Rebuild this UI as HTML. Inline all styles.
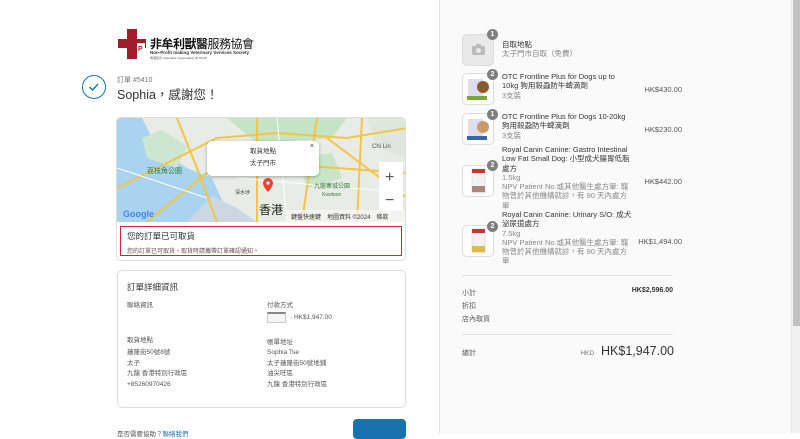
<!DOCTYPE html>
<html><head><meta charset="utf-8"><style>
*{margin:0;padding:0;box-sizing:border-box}
body{width:800px;height:433px;overflow:hidden;background:#fff;font-family:"Liberation Sans","Noto Sans CJK TC",sans-serif;color:#333;position:relative}
.a{position:absolute}
.s{font-size:8px;color:#555}
.right{left:439px;top:0;width:352px;height:433px;background:#fafafa;border-left:1px solid #e1e1e1}
.sb{left:791px;top:0;width:9px;height:433px;background:#f1f1f1;border-left:1px solid #e5e5e5}
.sb div{position:absolute;left:1px;top:0;width:7px;height:326px;background:#c1c1c1}
.thumb{width:32px;height:32px;border:1px solid #ddd;border-radius:5px;background:#fff}
.badge{width:11px;height:11px;border-radius:50%;background:#7f7f7f;color:#fff;font-size:7px;text-align:center;line-height:11px;font-weight:bold}
.pt{font-size:7.5px;color:#333;line-height:9.3px;white-space:nowrap}
.pt span{color:#888;line-height:9.3px}
.pr{font-size:7.5px;color:#555;right:118px}
</style></head><body>
<!-- logo -->
<div class="a" style="left:116px;top:29px;width:32px;height:30px">
<svg width="32" height="30"><rect x="2" y="10" width="28" height="9" fill="#a11d2b"/><rect x="11" y="0" width="10" height="30" fill="#a11d2b"/><rect x="21" y="14" width="8" height="9" fill="#fff"/><text x="22" y="22" font-size="7" fill="#a11d2b" font-weight="bold">P</text></svg></div>
<div class="a" style="left:150px;top:35px;font-size:12px;font-weight:bold;color:#111;letter-spacing:-0.5px">非牟利獸醫<span style="font-weight:normal">服務協會</span></div>
<div class="a" style="left:150px;top:50px;font-size:4.5px;color:#333;font-weight:bold">Non-Profit making Veterinary Services Society</div>
<div class="a" style="left:150px;top:56px;font-size:3px;color:#555">香港慈善 Charitable Organization IR 91/35</div>
<!-- check -->
<div class="a" style="left:82px;top:75px;width:24px;height:24px;border:1.5px solid #1773b0;border-radius:50%"><svg width="21" height="21" style="position:absolute;left:0;top:0"><path d="M6.5 11 L9.5 14 L15 8" stroke="#1773b0" stroke-width="1.4" fill="none"/></svg></div>
<div class="a s" style="left:117px;top:75px;font-size:7px;color:#777">訂單 #5410</div>
<div class="a" style="left:117px;top:84px;font-size:12.5px;color:#333">Sophia，感謝您！</div>
<!-- map card -->
<div class="a" style="left:116px;top:117px;width:290px;height:144px;border:1px solid #ddd;border-radius:5px;overflow:hidden">
<svg width="290" height="104" style="position:absolute;left:0;top:0">
<rect width="290" height="104" fill="#e8ebe6"/>
<path d="M0 0 H25 L40 30 L70 50 L95 60 L115 104 H0Z" fill="#aad3f0"/>
<path d="M25 20 L45 12 L70 28 L60 50 L30 40Z" fill="#cde6d0"/>
<path d="M70 104 L95 78 L120 90 L140 104Z" fill="#cbd8e4"/>
<path d="M110 0 H230 L215 20 L140 25Z" fill="#c5e3c5"/>
<path d="M180 40 L215 35 L225 60 L190 70Z" fill="#c8e6c6"/>
<path d="M250 0 L290 0 L290 40 L260 30Z" fill="#dfe6dc"/>
<g stroke="#f4c542" stroke-width="2" fill="none">
<path d="M0 70 L60 40 L100 20 L160 15 L230 20 L290 10"/>
<path d="M140 0 L140 104"/><path d="M200 0 L185 104"/><path d="M245 0 L240 104"/>
<path d="M30 104 L90 55 L150 45 L290 55"/><path d="M60 0 L80 50 L100 104"/>
<path d="M210 20 L290 80"/>
</g>
<g stroke="#fff" stroke-width="1" fill="none"><path d="M0 50 L90 80"/><path d="M120 60 L290 75"/><path d="M160 0 L170 104"/></g>
<text x="30" y="55" font-size="7" fill="#2e7d32">荔枝角公園</text>
<text x="197" y="70" font-size="6" fill="#2e7d32">九龍寨城公園</text>
<text x="205" y="78" font-size="5" fill="#2e7d32">Kowloon</text>
<text x="255" y="30" font-size="6" fill="#555">Chi Lin</text>
<text x="118" y="76" font-size="5" fill="#444">深水埗</text>
<text x="142" y="96" font-size="12" fill="#222">香港</text>
<text x="6" y="99" font-size="9" fill="#4285f4" font-weight="bold">Google</text>
<rect x="170" y="92" width="120" height="12" fill="#f5f5f5" opacity=".8"/>
<text x="174" y="101" font-size="6" fill="#333">鍵盤快速鍵　地圖資料 ©2024　條款</text>
<path d="M146 65 a5 5 0 1 1 10 0 c0 4 -5 9 -5 9 c0 0 -5 -5 -5 -9z" fill="#ea4335"/><circle cx="151" cy="65" r="1.6" fill="#fff"/>
<rect x="262" y="44" width="24" height="49" fill="#fff"/>
<text x="268" y="64" font-size="16" fill="#555">+</text><text x="268" y="87" font-size="16" fill="#555">−</text>
</svg>
<div class="a" style="left:90px;top:23px;width:112px;height:35px;background:#fff;border-radius:5px;box-shadow:0 1px 3px rgba(0,0,0,.3);text-align:center;font-size:6.5px;color:#333;line-height:12px;padding-top:5px">取貨地點<br>太子門市<span style="position:absolute;right:5px;top:0;font-size:7px">×</span></div>
<div class="a" style="left:3px;top:108px;width:282px;height:30px;border:1.5px solid #d9213b;padding:3px 6px">
<div style="font-size:8.5px;color:#333">您的訂單已可取貨</div>
<div style="font-size:6px;color:#555;margin-top:4px">您的訂單已可取貨。取貨時請攜帶訂單確認通知。</div></div>
</div>
<!-- details -->
<div class="a" style="left:117px;top:270px;width:289px;height:138px;border:1px solid #ddd;border-radius:5px"></div>
<div class="a" style="left:127px;top:281px;font-size:8.5px;color:#333">訂單詳細資訊</div>
<div class="a s" style="left:127px;top:299px;font-size:6.5px">聯絡資訊</div>
<div class="a s" style="left:267px;top:299px;font-size:6.5px">付款方式</div>
<div class="a" style="left:267px;top:312px;width:19px;height:11px;border:1px solid #ccc;border-top:2px solid #888;background:#f5f5f5"></div>
<div class="a s" style="left:290px;top:314px;font-size:6.5px">· HK$1,947.00</div>
<div class="a s" style="left:127px;top:334px;font-size:6.5px">取貨地點</div>
<div class="a s" style="left:127px;top:348px;font-size:6.5px;line-height:10.7px">蓮隆街50號8號<br>太子<br>九龍 香港特別行政區<br>+85260970426</div>
<div class="a s" style="left:267px;top:336px;font-size:6.5px">帳單地址</div>
<div class="a s" style="left:267px;top:348px;font-size:6.5px;line-height:10.7px">Sophia Tse<br>太子蓮隆街50號地鋪<br>油尖旺區<br>九龍 香港特別行政區</div>
<div class="a s" style="left:117px;top:428px;font-size:6.5px">是否需要協助？<span style="color:#1773b0">聯絡我們</span></div>
<div class="a" style="left:353px;top:419px;width:53px;height:20px;background:#1773b0;border-radius:4px"></div>
<!-- right -->
<div class="a right"></div>
<div class="a sb"><div></div></div>
<div class="a thumb" style="left:462px;top:34px;background:#e9e9e9"><svg width="30" height="30"><rect x="9" y="11" width="13" height="9" rx="1.5" fill="#bbb"/><rect x="13" y="9" width="5" height="3" fill="#bbb"/><circle cx="15.5" cy="15.5" r="2.5" fill="#e9e9e9"/></svg></div>
<div class="a badge" style="left:487px;top:29px">1</div>
<div class="a pt" style="left:502px;top:40px">自取地點<br><span>太子門市自取（免費）</span></div>

<div class="a thumb" style="left:462px;top:73px"><svg width="30" height="30"><rect x="5" y="5" width="15" height="20" fill="#dde"/><circle cx="20" cy="13" r="6" fill="#8b5a2b"/><rect x="4" y="22" width="20" height="4" fill="#7a3"/></svg></div>
<div class="a badge" style="left:487px;top:69px">2</div>
<div class="a pt" style="left:502px;top:72px">OTC Frontline Plus for Dogs up to<br>10kg 狗用殺蝨防牛蜱滴劑<br><span>3支裝</span></div>
<div class="a pr" style="top:85px">HK$430.00</div>

<div class="a thumb" style="left:462px;top:113px"><svg width="30" height="30"><rect x="5" y="5" width="15" height="20" fill="#dde"/><circle cx="20" cy="13" r="6" fill="#c96"/><rect x="4" y="22" width="20" height="4" fill="#36a"/></svg></div>
<div class="a badge" style="left:487px;top:109px">1</div>
<div class="a pt" style="left:502px;top:112px">OTC Frontline Plus for Dogs 10-20kg<br>狗用殺蝨防牛蜱滴劑<br><span>3支裝</span></div>
<div class="a pr" style="top:125px">HK$230.00</div>

<div class="a thumb" style="left:462px;top:165px"><svg width="30" height="30"><rect x="9" y="3" width="13" height="24" fill="#f2f2f2" stroke="#ccc" stroke-width=".5"/><rect x="9" y="3" width="13" height="4" fill="#c33"/><rect x="9" y="20" width="13" height="6" fill="#a87"/></svg></div>
<div class="a badge" style="left:487px;top:160px">2</div>
<div class="a pt" style="left:502px;top:145px">Royal Canin Canine: Gastro Intestinal<br>Low Fat Small Dog: 小型成犬腸胃低脂<br>處方<br><span>1.5kg<br>NPV Patient No.或其他醫生處方單: 寵<br>物曾於其他機構就診，有 90 天內處方<br>單</span></div>
<div class="a pr" style="top:177px">HK$442.00</div>

<div class="a thumb" style="left:462px;top:225px"><svg width="30" height="30"><rect x="9" y="3" width="13" height="24" fill="#f2f2f2" stroke="#ccc" stroke-width=".5"/><rect x="9" y="3" width="13" height="4" fill="#c33"/><rect x="9" y="20" width="13" height="6" fill="#db4"/></svg></div>
<div class="a badge" style="left:487px;top:221px">2</div>
<div class="a pt" style="left:502px;top:210px">Royal Canin Canine: Urinary S/O: 成犬<br>泌尿道處方<br><span>7.5kg<br>NPV Patient No.或其他醫生處方單: 寵<br>物曾於其他機構就診，有 90 天內處方<br>單</span></div>
<div class="a pr" style="top:237px">HK$1,494.00</div>

<div class="a" style="left:462px;top:275px;width:211px;border-top:1px solid #e1e1e1"></div>
<div class="a s" style="left:462px;top:287px;font-size:7px;line-height:13px">小計<br>折扣<br>店內取貨</div>
<div class="a" style="left:600px;top:287px;width:73px;text-align:right;font-size:7px;font-weight:bold;color:#333">HK$2,596.00</div>
<div class="a" style="left:462px;top:334px;width:211px;border-top:1px solid #e1e1e1"></div>
<div class="a s" style="left:462px;top:348px;font-size:7px">總計</div>
<div class="a" style="left:560px;top:344px;width:114px;text-align:right;font-size:12.5px;color:#333"><span style="font-size:6.5px;color:#777">HKD</span>&nbsp; HK$1,947.00</div>
</body></html>
